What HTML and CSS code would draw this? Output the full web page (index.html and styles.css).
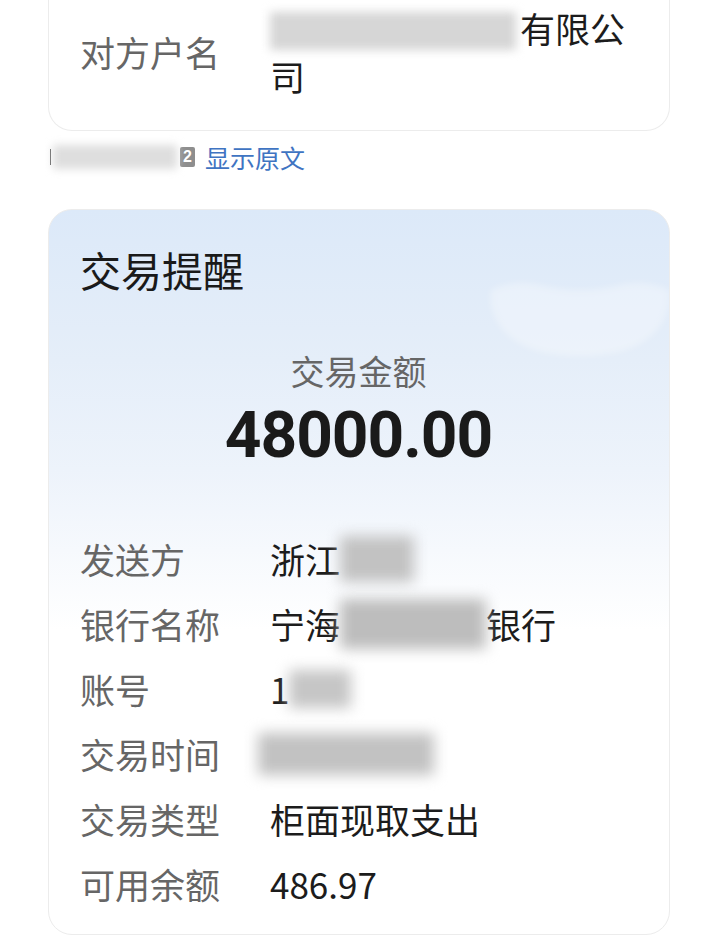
FILE: index.html
```html
<!DOCTYPE html>
<html lang="zh-CN">
<head>
<meta charset="utf-8">
<link rel="stylesheet" href="styles.css">
</head>
<body>
<div class="page">
  <section class="card card-top">
    <div class="kv kv-top">
      <div class="k">对方户名</div>
      <div class="v v-wrap"><span class="blur blur-name"></span>有限公司</div>
    </div>
  </section>

  <div class="origin">
    <span class="tick"></span><span class="blur blur-src"></span><span class="badge">2</span><span class="link">显示原文</span>
  </div>

  <section class="card card-alert">
    <svg class="deco" width="190" height="90" viewBox="0 0 190 90" aria-hidden="true">
      <path d="M6 14 Q30 2 60 10 Q95 18 130 10 Q160 2 184 14 Q188 34 172 54 Q150 80 95 80 Q40 80 18 54 Q2 34 6 14 Z" fill="#ffffff" fill-opacity="0.3"/>
    </svg>
    <h2 class="title">交易提醒</h2>
    <div class="amount-label">交易金额</div>
    <div class="amount">48000.00</div>
    <div class="rows">
      <div class="kv"><div class="k">发送方</div><div class="v">浙江<span class="blur blur-a"></span></div></div>
      <div class="kv"><div class="k">银行名称</div><div class="v">宁海<span class="blur blur-b"></span>银行</div></div>
      <div class="kv"><div class="k">账号</div><div class="v">1<span class="blur blur-c"></span></div></div>
      <div class="kv"><div class="k">交易时间</div><div class="v"><span class="blur blur-d"></span></div></div>
      <div class="kv"><div class="k">交易类型</div><div class="v">柜面现取支出</div></div>
      <div class="kv"><div class="k">可用余额</div><div class="v">486.97</div></div>
    </div>
  </section>
</div>
</body>
</html>
```

FILE: styles.css
```css
html, body {
  margin: 0;
  padding: 0;
  background: #ffffff;
}
body {
  font-family: "Noto Sans CJK SC", "Noto Sans", sans-serif;
  color: #1c1c1c;
  width: 720px;
  height: 936px;
  overflow: hidden;
}
.page {
  padding: 0 50px 0 48px;
}
.card {
  border: 1px solid #ececec;
  border-radius: 24px;
  background: #ffffff;
  box-sizing: border-box;
}
.card-top {
  border-top: none;
  border-radius: 0 0 24px 24px;
  padding: 4px 32px 30px 31px;
}
.kv {
  display: flex;
  align-items: center;
}
.k {
  width: 190px;
  flex: none;
  font-size: 35px;
  color: #666666;
  line-height: 65px;
}
.v {
  font-size: 35px;
  color: #1c1c1c;
  line-height: 65px;
  display: flex;
  align-items: center;
  white-space: nowrap;
}
.kv-top .k {
  line-height: 48px;
}
.v-wrap {
  display: block;
  white-space: normal;
  width: 370px;
  line-height: 48px;
}
.blur {
  display: inline-block;
  background: #c9c9c9;
  filter: blur(7px);
  vertical-align: middle;
}
.blur-name {
  width: 246px;
  height: 38px;
  margin-right: 4px;
  background: #d6d6d6;
  margin-top: -6px;
  filter: blur(5px);
}
.origin {
  margin-top: 12px;
  height: 28px;
  display: flex;
  align-items: center;
  padding-left: 2px;
}
.tick {
  width: 1px;
  height: 16px;
  background: #555;
}
.blur-src {
  width: 124px;
  height: 24px;
  background: #dedede;
  filter: blur(4px);
  margin-left: 2px;
}
.badge {
  width: 15px;
  height: 20px;
  background: #8e8e8e;
  color: #ffffff;
  font-family: "Liberation Sans", sans-serif;
  font-weight: bold;
  font-size: 16px;
  line-height: 20px;
  text-align: center;
  border-radius: 2px;
  margin-left: 3px;
}
.link {
  margin-left: 10px;
  font-size: 25px;
  color: #3f74c2;
  line-height: 28px;
}
.card-alert {
  position: relative;
  overflow: hidden;
  margin-top: 38px;
  height: 726px;
  padding: 31px 32px 0 31px;
  background: linear-gradient(180deg, #dce9f9 0px, #e5eef9 150px, #edf3fb 260px, #f6f9fd 340px, #ffffff 420px);
}
.deco {
  position: absolute;
  left: 436px;
  top: 66px;
  filter: blur(3px);
}
.title {
  position: relative;
  margin: 0;
  font-size: 41px;
  font-weight: 400;
  line-height: 56px;
  color: #1a1a1a;
}
.amount-label {
  position: relative;
  margin-top: 50px;
  text-align: center;
  font-size: 34px;
  line-height: 48px;
  color: #666666;
}
.amount {
  position: relative;
  margin-top: 5px;
  text-align: center;
  font-family: Roboto, "Noto Sans", sans-serif;
  font-weight: 700;
  font-size: 64px;
  line-height: 72px;
  letter-spacing: -1px;
  color: #1a1a1a;
}
.rows {
  position: relative;
  margin-top: 54px;
}
.blur-a {
  width: 74px;
  height: 46px;
  background: #c2c2c2;
}
.blur-b {
  width: 146px;
  height: 50px;
  background: #bdbdbd;
}
.blur-c {
  width: 62px;
  height: 38px;
  background: #c6c6c6;
}
.blur-d {
  width: 176px;
  height: 42px;
  background: #c2c2c2;
  margin-left: -12px;
}
```
